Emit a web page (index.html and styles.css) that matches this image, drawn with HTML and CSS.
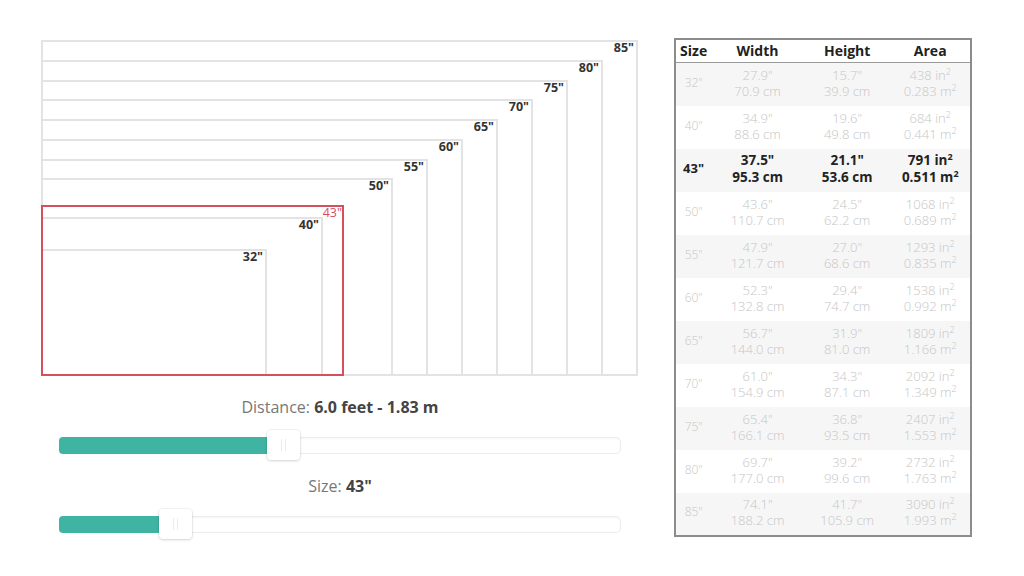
FILE: index.html
```html
<!DOCTYPE html>
<html>
<head>
<meta charset="utf-8">
<link rel="stylesheet" href="styles.css">
</head>
<body>
<div class="page">
  <div class="left">
    <div class="canvas">
      <div class="tv" style="width:597px;height:336px"><span class="lbl">85"</span></div>
      <div class="tv" style="width:562px;height:316px"><span class="lbl">80"</span></div>
      <div class="tv" style="width:527px;height:296px"><span class="lbl">75"</span></div>
      <div class="tv" style="width:492px;height:277px"><span class="lbl">70"</span></div>
      <div class="tv" style="width:457px;height:257px"><span class="lbl">65"</span></div>
      <div class="tv" style="width:422px;height:237px"><span class="lbl">60"</span></div>
      <div class="tv" style="width:387px;height:217px"><span class="lbl">55"</span></div>
      <div class="tv" style="width:352px;height:198px"><span class="lbl">50"</span></div>
      <div class="tv" style="width:282px;height:159px"><span class="lbl">40"</span></div>
      <div class="tv" style="width:226px;height:127px"><span class="lbl">32"</span></div>
      <div class="tv sel" style="width:303px;height:171px"><span class="lbl">43"</span></div>
    </div>
    <div class="caption">Distance: <b>6.0 feet - 1.83 m</b></div>
    <div class="slider">
      <div class="fill" style="width:209px"></div>
      <div class="thumb" style="left:207px"><i></i><i></i></div>
    </div>
    <div class="caption size">Size: <b>43"</b></div>
    <div class="slider">
      <div class="fill" style="width:101px"></div>
      <div class="thumb" style="left:99px"><i></i><i></i></div>
    </div>
  </div>

  <table class="sizes">
    <colgroup><col class="c1"><col class="c2"><col class="c3"><col class="c4"></colgroup>
    <thead>
      <tr><th>Size</th><th>Width</th><th>Height</th><th>Area</th></tr>
    </thead>
    <tbody>
      <tr><td class="sz">32"</td><td>27.9"<br>70.9 cm</td><td>15.7"<br>39.9 cm</td><td>438 in<sup>2</sup><br>0.283 m<sup>2</sup></td></tr>
      <tr><td class="sz">40"</td><td>34.9"<br>88.6 cm</td><td>19.6"<br>49.8 cm</td><td>684 in<sup>2</sup><br>0.441 m<sup>2</sup></td></tr>
      <tr class="on"><td class="sz">43"</td><td>37.5"<br>95.3 cm</td><td>21.1"<br>53.6 cm</td><td>791 in<sup>2</sup><br>0.511 m<sup>2</sup></td></tr>
      <tr><td class="sz">50"</td><td>43.6"<br>110.7 cm</td><td>24.5"<br>62.2 cm</td><td>1068 in<sup>2</sup><br>0.689 m<sup>2</sup></td></tr>
      <tr><td class="sz">55"</td><td>47.9"<br>121.7 cm</td><td>27.0"<br>68.6 cm</td><td>1293 in<sup>2</sup><br>0.835 m<sup>2</sup></td></tr>
      <tr><td class="sz">60"</td><td>52.3"<br>132.8 cm</td><td>29.4"<br>74.7 cm</td><td>1538 in<sup>2</sup><br>0.992 m<sup>2</sup></td></tr>
      <tr><td class="sz">65"</td><td>56.7"<br>144.0 cm</td><td>31.9"<br>81.0 cm</td><td>1809 in<sup>2</sup><br>1.166 m<sup>2</sup></td></tr>
      <tr><td class="sz">70"</td><td>61.0"<br>154.9 cm</td><td>34.3"<br>87.1 cm</td><td>2092 in<sup>2</sup><br>1.349 m<sup>2</sup></td></tr>
      <tr><td class="sz">75"</td><td>65.4"<br>166.1 cm</td><td>36.8"<br>93.5 cm</td><td>2407 in<sup>2</sup><br>1.553 m<sup>2</sup></td></tr>
      <tr><td class="sz">80"</td><td>69.7"<br>177.0 cm</td><td>39.2"<br>99.6 cm</td><td>2732 in<sup>2</sup><br>1.763 m<sup>2</sup></td></tr>
      <tr><td class="sz">85"</td><td>74.1"<br>188.2 cm</td><td>41.7"<br>105.9 cm</td><td>3090 in<sup>2</sup><br>1.993 m<sup>2</sup></td></tr>
    </tbody>
  </table>
</div>
</body>
</html>
```

FILE: styles.css
```css
html, body {
  margin: 0;
  padding: 0;
  background: #fff;
}
body {
  width: 1024px;
  height: 576px;
  overflow: hidden;
  font-family: "Open Sans", "Liberation Sans", sans-serif;
  color: #333;
}
.page {
  display: flex;
  align-items: flex-start;
  padding: 38px 0 0 41px;
  gap: 35px;
}
.left {
  width: 598px;
  display: flex;
  flex-direction: column;
  padding-top: 1px;
}
.canvas {
  position: relative;
  width: 598px;
  height: 337px;
}
.tv {
  position: absolute;
  left: 0;
  bottom: 0;
  box-sizing: border-box;
  border: 2px solid #e3e3e3;
  display: flex;
  justify-content: flex-end;
  align-items: flex-start;
  padding: 0 2px 0 0;
}
.tv.sel {
  border-color: #d4515b;
  z-index: 2;
  padding: 0;
}
.lbl {
  font-size: 12.5px;
  font-weight: 700;
  line-height: 12px;
  color: #333;
}
.tv.sel .lbl {
  color: #d4515b;
  font-weight: 400;
  line-height: 12px;
}
.caption {
  text-align: center;
  font-size: 16px;
  line-height: 20px;
  color: #777;
  margin-top: 21px;
}
.caption b {
  color: #444;
  font-weight: 700;
}
.caption.size {
  margin-top: 22px;
}
.slider {
  position: relative;
  margin: 20px 18px 0 18px;
  height: 17px;
  box-sizing: border-box;
  border: 1px solid #ececec;
  border-radius: 5px;
  background: #fff;
  box-shadow: inset 0 1px 2px rgba(0,0,0,0.04);
}
.fill {
  position: absolute;
  left: -1px;
  top: -1px;
  bottom: -1px;
  background: #3fb4a3;
  border-radius: 4px 0 0 4px;
}
.thumb {
  position: absolute;
  top: -8px;
  width: 33px;
  height: 30px;
  box-sizing: border-box;
  background: #fff;
  border-radius: 4px;
  box-shadow: 0 1px 3px rgba(0,0,0,0.14), 0 0 0 1px rgba(0,0,0,0.04);
  display: flex;
  justify-content: center;
  align-items: center;
  gap: 3px;
}
.thumb i {
  display: block;
  width: 1px;
  height: 12px;
  background: #ececec;
}
.sizes {
  width: 298px;
  border-collapse: collapse;
  table-layout: fixed;
  border: 2px solid #8c8c8c;
  text-align: center;
}
.sizes .c1 { width: 36px; }
.sizes .c2 { width: 92px; }
.sizes .c3 { width: 86px; }
.sizes .c4 { width: 80px; }
.sizes th {
  height: 22px;
  padding: 0;
  font-size: 14px;
  font-weight: 700;
  line-height: 22px;
  color: #222;
  border-bottom: 1px solid #9a9a9a;
}
.sizes td {
  height: 43px;
  padding: 0 0 3px 0;
  box-sizing: border-box;
  font-size: 13px;
  line-height: 16px;
  font-weight: 300;
  color: #c6c6c6;
  vertical-align: middle;
}
.sizes tbody tr:nth-child(odd) td {
  background: #f6f6f6;
}
.sizes td.sz {
  font-size: 12px;
}
.sizes sup {
  font-size: 9px;
  line-height: 0;
  vertical-align: 5px;
}
.sizes tr.on td {
  color: #222;
  font-weight: 700;
  font-size: 13.5px;
  line-height: 17px;
}
.sizes tr.on td.sz {
  font-size: 13px;
}
```
